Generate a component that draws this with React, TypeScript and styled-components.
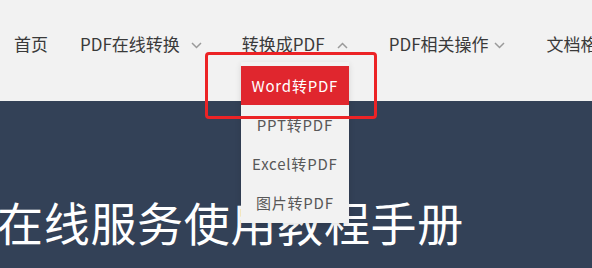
import styled, { createGlobalStyle } from 'styled-components';

const COLORS = {
  navBg: '#f2f2f2',
  hero: '#334157',
  text: '#3a3a3a',
  subText: '#585858',
  arrow: '#9a9a9a',
  red: '#e0262e',
  mark: '#ec2326',
};

const GlobalStyle = createGlobalStyle`
  html, body {
    margin: 0;
    padding: 0;
    width: 592px;
    height: 268px;
    overflow: hidden;
    background: ${COLORS.navBg};
    font-family: "Noto Sans CJK SC", "Noto Sans", sans-serif;
  }
`;

const Page = styled.div`
  position: relative;
  width: 592px;
  height: 268px;
  overflow: hidden;
  display: flex;
  flex-direction: column;
`;

const Header = styled.header`
  height: 101px;
  flex-shrink: 0;
  background: ${COLORS.navBg};
  padding: 33px 0 0 14px;
  box-sizing: border-box;
`;

const Nav = styled.nav`
  display: flex;
  align-items: center;
  white-space: nowrap;
  position: relative;
`;

const NavItem = styled.div<{ $after: number }>`
  position: relative;
  display: flex;
  align-items: center;
  margin-right: ${p => p.$after}px;
  font-size: 17px;
  line-height: 22px;
  color: ${COLORS.text};
  flex-shrink: 0;
`;

const Arrow = styled.svg<{ $gap: number }>`
  width: 11px;
  height: 7px;
  margin-left: ${p => p.$gap}px;
  margin-top: 2px;
`;

const Dropdown = styled.ul`
  position: absolute;
  top: 29px;
  left: -1px;
  width: 108px;
  margin: 0;
  padding: 4px 0 1px;
  list-style: none;
  background: ${COLORS.navBg};
  box-shadow: 0 2px 6px rgba(0, 0, 0, 0.12);
  z-index: 2;
`;

const DropItem = styled.li<{ $active?: boolean }>`
  height: 39px;
  display: flex;
  align-items: center;
  justify-content: center;
  font-size: 15px;
  letter-spacing: 0.8px;
  color: ${p => (p.$active ? '#ffffff' : COLORS.subText)};
  background: ${p => (p.$active ? COLORS.red : 'transparent')};
`;

const Hero = styled.section`
  flex: 1;
  background: ${COLORS.hero};
  padding-top: 92px;
  box-sizing: border-box;
`;

const Title = styled.h1`
  margin: 0;
  text-indent: -3px;
  font-size: 46px;
  letter-spacing: 0.7px;
  font-weight: 400;
  line-height: 56px;
  color: #ffffff;
  white-space: nowrap;
`;

const Highlight = styled.div`
  position: absolute;
  left: 205px;
  top: 52px;
  width: 172px;
  height: 67px;
  box-sizing: border-box;
  border: 3px solid ${COLORS.mark};
  border-radius: 4px;
  pointer-events: none;
  z-index: 3;
`;

const Chevron = ({ up, gap }: { up?: boolean; gap: number }) => (
  <Arrow $gap={gap} viewBox="0 0 11 7">
    <path
      d={up ? 'M1 6 L5.5 1.5 L10 6' : 'M1 1 L5.5 5.5 L10 1'}
      fill="none"
      stroke={COLORS.arrow}
      strokeWidth="1.5"
    />
  </Arrow>
);

const SUB_ITEMS = ['Word转PDF', 'PPT转PDF', 'Excel转PDF', '图片转PDF'];

export default function App() {
  return (
    <Page>
      <GlobalStyle />
      <Header>
        <Nav>
          <NavItem $after={32}>首页</NavItem>
          <NavItem $after={40}>
            PDF在线转换
            <Chevron gap={11} />
          </NavItem>
          <NavItem $after={41}>
            转换成PDF
            <Chevron up gap={12} />
            <Dropdown>
              {SUB_ITEMS.map((item, i) => (
                <DropItem key={item} $active={i === 0}>
                  {item}
                </DropItem>
              ))}
            </Dropdown>
          </NavItem>
          <NavItem $after={42}>
            PDF相关操作
            <Chevron gap={5} />
          </NavItem>
          <NavItem $after={0}>文档格式转换</NavItem>
        </Nav>
      </Header>
      <Hero>
        <Title>在线服务使用教程手册</Title>
      </Hero>
      <Highlight />
    </Page>
  );
}
